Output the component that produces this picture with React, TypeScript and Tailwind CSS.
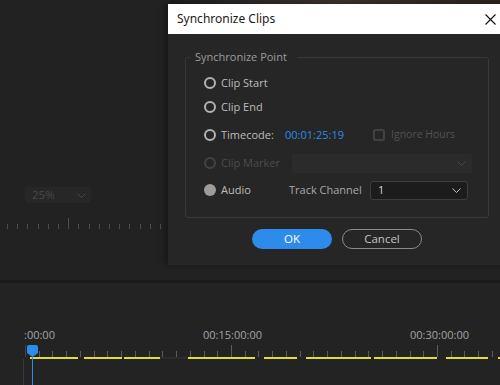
import React from 'react'

type RadioState = 'off' | 'on' | 'disabled'

const monitorTicks = Array.from({ length: 16 }, (_, i) => 7 + i * 10.2)
const timelineTicks = Array.from({ length: 35 }, (_, i) => ({ x: 25 + i * 13.733, major: i % 15 === 0 }))
const clips: [number, number][] = [
  [30, 78],
  [84, 122],
  [124, 160],
  [188, 255],
  [264, 297],
  [306, 371],
  [374, 437],
  [446, 488],
  [498, 502],
]

export default function App() {
  return (
    <div className="relative w-[500px] h-[385px] overflow-hidden bg-[#232323] font-['Open_Sans',sans-serif]">
      {/* UPPER PANELS */}
      <div className="relative h-[280px] bg-[#222222]">
        <div className="pt-[187px] pl-[25px]">
          <div className="w-[66px] h-[16px] bg-[#272727] rounded-[2px] flex items-center justify-between pl-[7px] pr-[5px]">
            <span className="text-[11.5px] text-[#484848] leading-none">25%</span>
            <Chevron color="#474747" />
          </div>
        </div>
        <svg width="170" height="12" className="mt-[15px]">
          {monitorTicks.map((x, i) => (
            <line
              key={i}
              x1={Math.round(x) + 0.5}
              x2={Math.round(x) + 0.5}
              y1={i === 6 ? 0 : 6}
              y2={11}
              stroke="#4d4d4d"
              strokeWidth="1"
            />
          ))}
        </svg>

        {/* video frame peeking above the dialog */}
        <div className="absolute left-[170px] top-0 w-[330px] h-[6px] bg-gradient-to-r from-[#1e1e1e] via-[#3a332e] to-[#2a2420]" />

        <SyncDialog />
      </div>

      <div className="h-[3px] bg-[#1a1a1a]" />

      {/* TIMELINE */}
      <div className="pt-[45px]">
        <div className="flex pl-[24px] text-[11px] leading-[14px] text-[#a3a3a3]">
          <span className="w-[179px]">:00:00</span>
          <span className="w-[207px]">00:15:00:00</span>
          <span>00:30:00:00</span>
        </div>
        <svg width="500" height="45" className="block">
          {timelineTicks.map((t, i) => (
            <line
              key={i}
              x1={Math.round(t.x) + 0.5}
              x2={Math.round(t.x) + 0.5}
              y1={t.major ? 3 : 9}
              y2={15}
              stroke={i === 0 ? '#444' : '#5c5c5c'}
              strokeWidth="1"
            />
          ))}
          <line x1="23.5" x2="23.5" y1="17" y2="45" stroke="#3a3a3a" strokeWidth="1" />
          <rect x="160" y="15" width="28" height="2" fill="#2c2c2c" />
          {clips.map(([a, b], i) => (
            <rect key={i} x={a} y="15" width={b - a} height="2" fill="#e2dc36" />
          ))}
          <line x1="32.5" x2="32.5" y1="12" y2="45" stroke="#2d8ceb" strokeWidth="1" />
          <path d="M27 5 Q27 3 29 3 H36 Q38 3 38 5 V11 L32.5 15 L27 11 Z" fill="#2d8ceb" />
        </svg>
      </div>
    </div>
  )
}

/* ---------------- COMPONENTS ---------------- */

function SyncDialog() {
  return (
    <div className="absolute left-[168px] top-[4px] w-[338px] bg-[#262626] shadow-[-3px_0_6px_rgba(0,0,0,0.35)]">
      <div className="h-[30px] bg-white flex items-center justify-between pl-[9px] pr-[10px]">
        <span className="text-[12px] text-[#1a1a1a] font-['Noto_Sans',sans-serif]">Synchronize Clips</span>
        <svg width="11" height="11" viewBox="0 0 11 11">
          <path d="M0.5 0.5 L10.5 10.5 M10.5 0.5 L0.5 10.5" stroke="#111" strokeWidth="1.1" />
        </svg>
      </div>

      <div className="px-[17px] pt-[15px] pb-[16px]">
        <fieldset className="border border-[#383838] rounded-[3px] px-0 pb-[15px]">
          <legend className="ml-[5px] pl-[4px] pr-[10px] text-[11px] leading-[16px] text-[#9c9c9c]">
            Synchronize Point
          </legend>

          <div className="pl-[18px] pt-[6px] text-[11px] text-[#bdbdbd]">
            <div className="h-[24px] flex items-center">
              <RadioLabel state="off" label="Clip Start" />
            </div>
            <div className="h-[24px] flex items-center">
              <RadioLabel state="off" label="Clip End" />
            </div>

            <div className="h-[24px] mt-[4px] flex items-center">
              <div className="w-[81px] shrink-0">
                <RadioLabel state="off" label="Timecode:" />
              </div>
              <span className="w-[88px] shrink-0 text-[#2b8be6]">00:01:25:19</span>
              <span className="w-[12px] h-[12px] shrink-0 border-2 border-[#414141] rounded-[2px]" />
              <span className="ml-[6px] text-[10.5px] text-[#525252]">Ignore Hours</span>
            </div>

            <div className="h-[24px] mt-[4px] flex items-center">
              <div className="w-[88px] shrink-0">
                <RadioLabel state="disabled" label="Clip Marker" />
              </div>
              <div className="w-[180px] h-[19px] bg-[#2b2b2b] rounded-[2px] flex items-center justify-end pr-[6px]">
                <Chevron color="#464646" />
              </div>
            </div>

            <div className="h-[24px] mt-[3px] flex items-center">
              <div className="w-[85px] shrink-0">
                <RadioLabel state="on" label="Audio" />
              </div>
              <span className="w-[81px] shrink-0 text-[#a8a8a8]">Track Channel</span>
              <div className="w-[98px] h-[19px] bg-[#1c1c1c] border border-[#3d3d3d] rounded-[3px] flex items-center justify-between pl-[7px] pr-[6px]">
                <span className="text-[#d4d4d4]">1</span>
                <Chevron color="#c4c4c4" />
              </div>
            </div>
          </div>
        </fieldset>

        <div className="flex justify-center gap-[10px] mt-[11px]">
          <button className="w-[80px] h-[20px] rounded-full bg-[#2d8ceb] text-[11.5px] leading-none text-white">
            OK
          </button>
          <button className="w-[80px] h-[20px] rounded-full border border-[#8a8a8a] text-[11.5px] leading-none text-[#c4c4c4]">
            Cancel
          </button>
        </div>
      </div>
    </div>
  )
}

function RadioLabel({ state, label }: { state: RadioState; label: string }) {
  const circle = {
    off: 'border-2 border-[#b3b3b3]',
    on: 'bg-[#9c9c9c]',
    disabled: 'border-2 border-[#424242]',
  }
  return (
    <div className="flex items-center gap-[5px]">
      <span className={`w-[12px] h-[12px] shrink-0 rounded-full ${circle[state]}`} />
      <span className={state === 'disabled' ? 'text-[#4c4c4c]' : ''}>{label}</span>
    </div>
  )
}

function Chevron({ color }: { color: string }) {
  return (
    <svg width="9" height="5" viewBox="0 0 9 5">
      <path d="M0.5 0.5 L4.5 4.5 L8.5 0.5" fill="none" stroke={color} strokeWidth="1" />
    </svg>
  )
}
